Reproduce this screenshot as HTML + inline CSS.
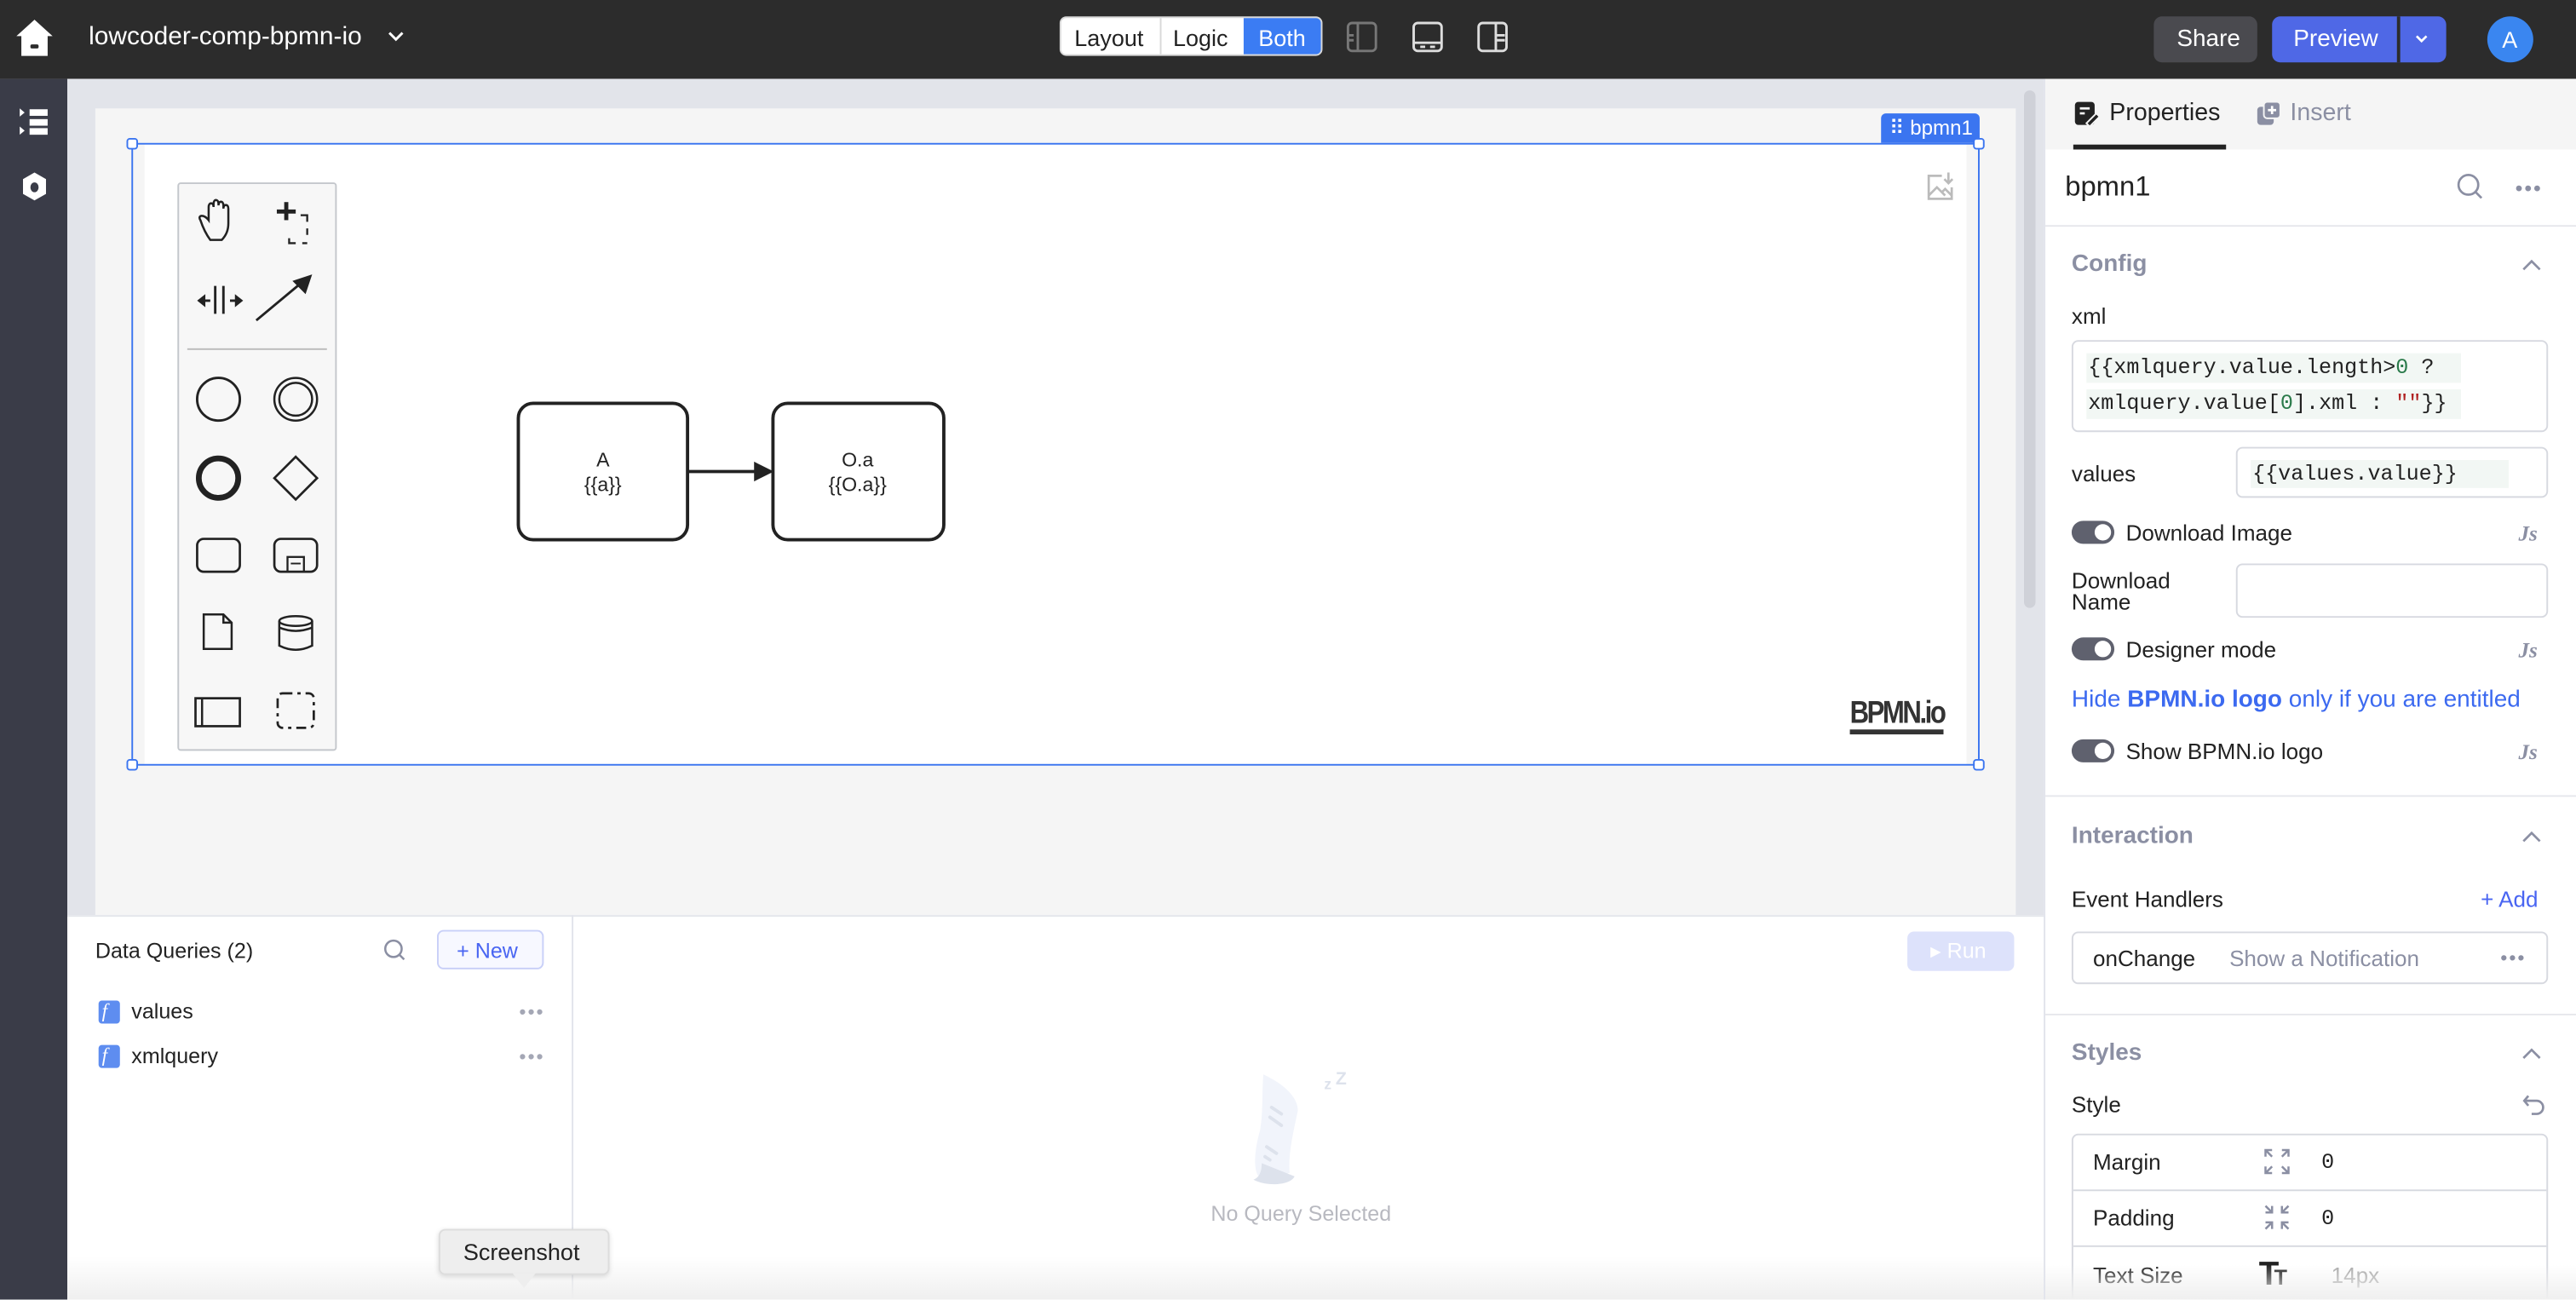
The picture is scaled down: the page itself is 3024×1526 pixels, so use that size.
<!DOCTYPE html>
<html><head><meta charset="utf-8">
<style>
*{box-sizing:border-box;margin:0;padding:0}
html,body{width:3024px;height:1526px;overflow:hidden;background:#fff}
#w{position:absolute;left:0;top:0;width:1568px;height:791px;transform:scale(1.928571);transform-origin:0 0;font-family:"Liberation Sans",sans-serif;color:#222;overflow:hidden}
.a{position:absolute}
.t{position:absolute;white-space:nowrap;line-height:1}
.mono{font-family:"Liberation Mono",monospace}
.tog{position:absolute;width:26px;height:14px;border-radius:7px;background:#5f616e}
.tog:after{content:"";position:absolute;right:2px;top:2px;width:10px;height:10px;border-radius:50%;background:#fff}
.js{position:absolute;font-style:italic;font-weight:bold;color:#8b8fa3;font-size:13px;font-family:"Liberation Serif",serif}
.sec{color:#8b8fa3;font-weight:bold;font-size:14.5px}
.box{position:absolute;border:1px solid #d7d9e0;border-radius:4px;background:#fff}
.h{position:absolute;width:7px;height:7px;border:1.3px solid #3b75f0;background:#fff;border-radius:2px}
.dots{position:absolute;font-size:12px;color:#a4a7b5;letter-spacing:1px;line-height:1}
</style></head><body><div id="w">
<!-- header -->
<div class="a" style="left:0;top:0;width:1568px;height:48px;background:#2c2c2c"></div>
<svg class="a" style="left:8px;top:11px" width="26" height="24" viewBox="0 0 26 24"><path d="M13 1 L24 11 L21 11 L21 23 L5 23 L5 11 L2 11 Z" fill="#fff"/><rect x="10.5" y="16" width="5" height="2.5" rx="1" fill="#2c2c2c"/></svg>
<div class="t" style="left:54px;top:15px;font-size:15.5px;color:#fff">lowcoder-comp-bpmn-io</div>
<svg class="a" style="left:235px;top:17px" width="12" height="10"><path d="M2 3 L6 7 L10 3" stroke="#fff" stroke-width="1.5" fill="none"/></svg>
<div class="a" style="left:645px;top:10px;width:160px;height:24px;border-radius:4px;background:#fff;border:1px solid #d9d9d9;overflow:hidden">
 <div class="a" style="left:60px;top:0;width:1px;height:24px;background:#d9d9d9"></div>
 <div class="a" style="left:111px;top:-1px;width:49px;height:24px;background:#3b7cf3"></div>
 <div class="t" style="left:8px;top:5px;font-size:14px;color:#222">Layout</div>
 <div class="t" style="left:68px;top:5px;font-size:14px;color:#222">Logic</div>
 <div class="t" style="left:120px;top:5px;font-size:14px;color:#fff">Both</div>
</div>
<svg class="a" style="left:819px;top:12px" width="100" height="22" viewBox="0 0 100 22">
 <g fill="none" stroke="#777" stroke-width="1.5"><rect x="1.5" y="2" width="17" height="17" rx="2.5"/><path d="M7.5 2 V19 M2 9.5 H5 M2 12.5 H5"/></g>
 <g fill="none" stroke="#ddd" stroke-width="1.5"><rect x="41.5" y="2" width="17" height="17" rx="2.5"/><path d="M42 14 H58 M45.5 16.5 H48.5 M51.5 16.5 H54.5"/></g>
 <g fill="none" stroke="#ddd" stroke-width="1.5"><rect x="81" y="2" width="17" height="17" rx="2.5"/><path d="M91.5 2 V19 M92 9.5 H97 M92 12.5 H97"/></g>
</svg>
<div class="a" style="left:1311px;top:10px;width:63px;height:28px;border-radius:5px;background:#4a4a4f"></div>
<div class="t" style="left:1325px;top:17px;font-size:14.5px;color:#fff">Share</div>
<div class="a" style="left:1383px;top:10px;width:106px;height:28px;border-radius:5px;background:#4f68e6"></div>
<div class="a" style="left:1459px;top:10px;width:1.5px;height:28px;background:#2c2c2c"></div>
<div class="t" style="left:1396px;top:17px;font-size:14.5px;color:#fff">Preview</div>
<svg class="a" style="left:1468px;top:19px" width="12" height="10"><path d="M3 3 L6 6 L9 3" stroke="#fff" stroke-width="1.4" fill="none"/></svg>
<div class="a" style="left:1514px;top:10px;width:28px;height:28px;border-radius:50%;background:#3a86f0"></div>
<div class="t" style="left:1523px;top:17px;font-size:14px;color:#fff">A</div>
<!-- left sidebar -->
<div class="a" style="left:0;top:48px;width:41px;height:743px;background:#3a3c48"></div>
<svg class="a" style="left:11px;top:65px" width="20" height="20"><g fill="#fff"><path d="M1 1 L4 3.5 L1 6Z M1 12 L4 14.5 L1 17Z"/><rect x="7" y="1.5" width="11" height="4"/><rect x="7" y="7.5" width="11" height="4"/><rect x="7" y="13" width="11" height="4"/></g></svg>
<svg class="a" style="left:12px;top:104px" width="18" height="20"><path d="M9 1 L16 5 L16 14 L9 18 L2 14 L2 5Z" fill="#fff"/><ellipse cx="9" cy="10" rx="2.5" ry="3" fill="#3a3c48"/></svg>
<!-- canvas -->
<div class="a" style="left:41px;top:48px;width:1203px;height:509px;background:#e2e4ea"></div>
<div class="a" style="left:58px;top:66px;width:1169px;height:491px;background:#f5f5f5"></div>
<div class="a" style="left:1232px;top:55px;width:7px;height:315px;border-radius:4px;background:#cfd1d8"></div>
<div class="a" style="left:88px;top:88px;width:1109px;height:378px;background:#fff"></div>
<div class="a" style="left:80px;top:87px;width:1125px;height:379px;border:1.5px solid #3b75f0"></div>
<div class="a" style="left:1145px;top:69px;width:60px;height:18px;background:#3b75f0;border-radius:3px 3px 0 0"></div>
<div class="t" style="left:1150px;top:72px;font-size:12.5px;color:#fff">⠿ bpmn1</div>
<div class="h" style="left:77px;top:84px"></div><div class="h" style="left:1201px;top:84px"></div>
<div class="h" style="left:77px;top:462px"></div><div class="h" style="left:1201px;top:462px"></div>
<svg class="a" style="left:1171px;top:104px" width="20" height="20" viewBox="0 0 20 20"><g fill="none" stroke="#bbb" stroke-width="1.4"><path d="M11 3 H3 V17 H17 V10"/><path d="M3 15 L8 10 L13 15 M11 13 L13 11 L17 15"/><path d="M15 1 V7 M12.5 5 L15 7.5 L17.5 5"/></g></svg>
<!-- palette -->
<div class="a" style="left:108px;top:111px;width:97px;height:346px;background:#f7f7f7;border:1px solid #c4c7cc;border-radius:2px"></div>
<div class="a" style="left:114px;top:212px;width:85px;height:1px;background:#bbb"></div>
<svg class="a" style="left:108px;top:111px" width="97" height="346" viewBox="0 0 97 346">
 <g fill="none" stroke="#222" stroke-width="1.3">
  <path d="M14 23 C12 20 16 19 19 23 L19 15 C19 12 22 12 22 15 L22 13 C22 10 25 10 25 13 L25 14 C25 11 28 11 28 14 L28 16 C28 13 31 13 31 16 L31 25 C31 30 29 33 27 35 L20 35 C17 31 15 26 14 23Z"/>
  <path d="M75 20 H79 V24 M79 28 V32 M79 37 H76 M72 37 H68 V34" stroke-width="1.2"/>
 </g>
 <g fill="#222"><rect x="65" y="12" width="2.5" height="11"/><rect x="60.5" y="16.5" width="11.5" height="2.5"/></g>
 <g fill="none" stroke="#222" stroke-width="1.5"><path d="M23 63 V80 M28 63 V80 M14 72 H20 M32 72 H38 M48 84 L78 59"/></g>
 <path d="M12 72 L17 68 L17 76Z M40 72 L35 68 L35 76Z M82 56 L70 60 L78 68Z" fill="#222"/>
 <g fill="none" stroke="#222">
  <circle cx="25" cy="132" r="13" stroke-width="1.5"/>
  <circle cx="72" cy="132" r="13" stroke-width="1.3"/><circle cx="72" cy="132" r="10" stroke-width="1.3"/>
  <circle cx="25" cy="180" r="12" stroke-width="3.5"/>
  <path d="M72 167 L85 180 L72 193 L59 180Z" stroke-width="1.4"/>
  <rect x="12" y="217" width="26" height="20" rx="4" stroke-width="1.4"/>
  <rect x="59" y="217" width="26" height="20" rx="4" stroke-width="1.4"/><rect x="67" y="228" width="10" height="9" stroke-width="1.2"/><path d="M69 232 H75"/>
  <path d="M16 263 H28 L33 268 V284 H16Z M28 263 V268 H33" stroke-width="1.3"/>
  <ellipse cx="72" cy="267" rx="10" ry="3" stroke-width="1.3"/><path d="M62 267 V282 Q72 287 82 282 V267 M62 271 Q72 275 82 271" stroke-width="1.3"/>
  <rect x="11" y="314" width="27" height="17" stroke-width="1.4"/><path d="M15 314 V331" stroke-width="1.3"/>
  <rect x="61" y="311" width="22" height="21" rx="3" stroke-width="1.4" stroke-dasharray="6 3 2 3"/>
 </g>
</svg>
<!-- diagram -->
<svg class="a" style="left:300px;top:235px" width="300" height="110" viewBox="300 235 300 110">
 <rect x="315.5" y="245.5" width="103" height="83" rx="9" fill="#fff" stroke="#222" stroke-width="2"/>
 <rect x="470.5" y="245.5" width="104" height="83" rx="9" fill="#fff" stroke="#222" stroke-width="2"/>
 <path d="M419 287 H462" stroke="#222" stroke-width="2"/><path d="M459 281 L471 287 L459 293Z" fill="#222"/>
 <text x="367" y="284" font-size="12" text-anchor="middle" fill="#222" font-family="Liberation Sans">A</text>
 <text x="367" y="299" font-size="12" text-anchor="middle" fill="#222" font-family="Liberation Sans">{{a}}</text>
 <text x="522" y="284" font-size="12" text-anchor="middle" fill="#222" font-family="Liberation Sans">O.a</text>
 <text x="522" y="299" font-size="12" text-anchor="middle" fill="#222" font-family="Liberation Sans">{{O.a}}</text>
</svg>
<div class="t" style="left:1126px;top:425px;font-size:19px;font-weight:bold;color:#333;letter-spacing:-1.5px;transform:scaleX(0.85);transform-origin:0 0">BPMN.io</div>
<div class="a" style="left:1126px;top:444px;width:57px;height:3px;background:#333"></div>
<!-- bottom panel -->
<div class="a" style="left:41px;top:557px;width:1203px;height:234px;background:#fff;border-top:1px solid #e4e6eb"></div>
<div class="a" style="left:348px;top:557px;width:1px;height:234px;background:#e1e3eb"></div>
<div class="t" style="left:58px;top:572px;font-size:13px;color:#222">Data Queries (2)</div>
<svg class="a" style="left:233px;top:571px" width="15" height="15"><circle cx="6.5" cy="6.5" r="5" fill="none" stroke="#8b8fa3" stroke-width="1.3"/><path d="M10 10 L13 13" stroke="#8b8fa3" stroke-width="1.3"/></svg>
<div class="a" style="left:266px;top:566px;width:65px;height:24px;border:1px solid #c9d0f8;border-radius:4px;background:#f7f8ff"></div>
<div class="t" style="left:278px;top:572px;font-size:13px;color:#4965f2">+ New</div>
<div class="a" style="left:60px;top:609px;width:13px;height:14px;border-radius:2px;background:#5e8df0"></div>
<div class="t" style="left:62px;top:609px;font-size:12px;color:#fff;font-style:italic;font-family:'Liberation Serif',serif">f</div>
<div class="t" style="left:80px;top:609px;font-size:13px">values</div>
<div class="dots" style="left:316px;top:610px">•••</div>
<div class="a" style="left:60px;top:636px;width:13px;height:14px;border-radius:2px;background:#5e8df0"></div>
<div class="t" style="left:62px;top:636px;font-size:12px;color:#fff;font-style:italic;font-family:'Liberation Serif',serif">f</div>
<div class="t" style="left:80px;top:636px;font-size:13px">xmlquery</div>
<div class="dots" style="left:316px;top:637px">•••</div>
<div class="a" style="left:1161px;top:567px;width:65px;height:24px;border-radius:4px;background:#dde2fb"></div>
<div class="t" style="left:1175px;top:572px;font-size:13px;color:#fff">▸ Run</div>
<svg class="a" style="left:760px;top:648px" width="70" height="75" viewBox="0 0 70 75"><path d="M9 6 C22 12 30 20 30 28 C27 42 24 55 25 66 L7 69 C2 65 4 50 7 40 C9 28 8 18 9 6Z" fill="#f1f4fb"/><path d="M8 60 C8 66 6 69 3 70 C10 74 25 74 28 68Z" fill="#dde2ec"/><g stroke="#dde2ec" stroke-width="2" stroke-linecap="round"><path d="M14 26 L20 30 M13 32 L20 37 M11 50 L17 54 M10 56 L13 58"/></g><text x="46" y="15" font-size="9" font-weight="bold" fill="#dde2ec">z</text><text x="53" y="12" font-size="11" font-weight="bold" fill="#dde2ec">Z</text></svg>
<div class="t" style="left:737px;top:732px;font-size:13px;color:#b8b9c0">No Query Selected</div>
<div class="a" style="left:41px;top:765px;width:1203px;height:26px;background:linear-gradient(#fff0,#efefef)"></div>
<div class="a" style="left:267px;top:748px;width:104px;height:28px;background:#eee;border:1px solid #ddd;border-radius:4px;box-shadow:0 1px 3px #0002"></div>
<div class="a" style="left:312px;top:775px;width:0;height:0;border-left:7px solid transparent;border-right:7px solid transparent;border-top:9px solid #eee"></div>
<div class="t" style="left:282px;top:755px;font-size:14px;color:#222">Screenshot</div>
<!-- right panel -->
<div class="a" style="left:1244px;top:48px;width:324px;height:743px;background:#fff;border-left:1px solid #e1e3eb"></div>
<div class="a" style="left:1245px;top:48px;width:323px;height:43px;background:#f5f5f5"></div>
<svg class="a" style="left:1262px;top:61px" width="16" height="16"><rect x="1" y="1" width="12" height="14" rx="2" fill="#222"/><path d="M4 5 H10 M4 8 H7" stroke="#f5f5f5" stroke-width="1.4"/><path d="M8 14 L14 8 L16 10 L10 16Z" fill="#222" stroke="#f5f5f5"/></svg>
<div class="t" style="left:1284px;top:62px;font-size:14.8px;color:#222">Properties</div>
<div class="a" style="left:1262px;top:88px;width:93px;height:3px;background:#222"></div>
<svg class="a" style="left:1373px;top:61px" width="16" height="16"><rect x="1" y="4" width="10" height="11" rx="2" fill="#8b8fa3"/><rect x="5" y="1" width="10" height="10" rx="2" fill="#8b8fa3" stroke="#f5f5f5"/><path d="M10 3.5 V8.5 M7.5 6 H12.5" stroke="#fff" stroke-width="1.4"/></svg>
<div class="t" style="left:1394px;top:62px;font-size:14.8px;color:#8b8fa3">Insert</div>
<div class="t" style="left:1257px;top:105px;font-size:17px;color:#222">bpmn1</div>
<svg class="a" style="left:1495px;top:105px" width="17" height="17"><circle cx="7.5" cy="7.5" r="6" fill="none" stroke="#8b8fa3" stroke-width="1.4"/><path d="M12 12 L15.5 15.5" stroke="#8b8fa3" stroke-width="1.4"/></svg>
<div class="dots" style="left:1531px;top:108px;font-size:13px;color:#8b8fa3">•••</div>
<div class="a" style="left:1245px;top:137px;width:323px;height:1px;background:#e6e7ec"></div>
<div class="t sec" style="left:1261px;top:154px">Config</div>
<svg class="a" style="left:1534px;top:156px" width="14" height="10"><path d="M2 8 L7 3 L12 8" fill="none" stroke="#8b8fa3" stroke-width="1.4"/></svg>
<div class="t" style="left:1261px;top:186px;font-size:13.5px">xml</div>
<div class="box" style="left:1261px;top:207px;width:290px;height:56px"></div>
<div class="a" style="left:1270px;top:215px;width:228px;height:18px;background:#f2f7f4"></div>
<div class="a" style="left:1270px;top:237px;width:228px;height:18px;background:#f2f7f4"></div>
<div class="t mono" style="left:1271px;top:217px;font-size:13px;color:#222">{{xmlquery.value.length&gt;<span style="color:#2a7a4a">0</span> ?</div>
<div class="t mono" style="left:1271px;top:239px;font-size:13px;color:#222">xmlquery.value[<span style="color:#2a7a4a">0</span>].xml : <span style="color:#b02222">""</span>}}</div>
<div class="t" style="left:1261px;top:282px;font-size:13.5px">values</div>
<div class="box" style="left:1361px;top:272px;width:190px;height:31px"></div>
<div class="a" style="left:1370px;top:280px;width:157px;height:17px;background:#f2f7f4"></div>
<div class="t mono" style="left:1371px;top:282px;font-size:13px">{{values.value}}</div>
<div class="tog" style="left:1261px;top:317px"></div>
<div class="t" style="left:1294px;top:318px;font-size:13.5px">Download Image</div>
<div class="js" style="left:1533px;top:317px">Js</div>
<div class="t" style="left:1261px;top:347px;font-size:13.5px;line-height:13px">Download<br>Name</div>
<div class="box" style="left:1361px;top:343px;width:190px;height:33px"></div>
<div class="tog" style="left:1261px;top:388px"></div>
<div class="t" style="left:1294px;top:389px;font-size:13.5px">Designer mode</div>
<div class="js" style="left:1533px;top:388px">Js</div>
<div class="t" style="left:1261px;top:419px;font-size:14.5px;color:#3c6af0">Hide <b>BPMN.io logo</b> only if you are entitled</div>
<div class="tog" style="left:1261px;top:450px"></div>
<div class="t" style="left:1294px;top:451px;font-size:13.5px">Show BPMN.io logo</div>
<div class="js" style="left:1533px;top:450px">Js</div>
<div class="a" style="left:1245px;top:484px;width:323px;height:1px;background:#e6e7ec"></div>
<div class="t sec" style="left:1261px;top:502px">Interaction</div>
<svg class="a" style="left:1534px;top:504px" width="14" height="10"><path d="M2 8 L7 3 L12 8" fill="none" stroke="#8b8fa3" stroke-width="1.4"/></svg>
<div class="t" style="left:1261px;top:541px;font-size:13.5px">Event Handlers</div>
<div class="t" style="left:1510px;top:541px;font-size:13.5px;color:#4965f2">+ Add</div>
<div class="box" style="left:1261px;top:567px;width:290px;height:32px"></div>
<div class="t" style="left:1274px;top:577px;font-size:13.5px">onChange</div>
<div class="t" style="left:1357px;top:577px;font-size:13.5px;color:#8b8fa3">Show a Notification</div>
<div class="dots" style="left:1522px;top:577px;color:#8b8fa3">•••</div>
<div class="a" style="left:1245px;top:617px;width:323px;height:1px;background:#e6e7ec"></div>
<div class="t sec" style="left:1261px;top:634px">Styles</div>
<svg class="a" style="left:1534px;top:636px" width="14" height="10"><path d="M2 8 L7 3 L12 8" fill="none" stroke="#8b8fa3" stroke-width="1.4"/></svg>
<div class="t" style="left:1261px;top:666px;font-size:13.5px">Style</div>
<svg class="a" style="left:1535px;top:665px" width="15" height="15"><path d="M4 2 L1.5 5 L4 8 M2 5 H9 A4 4 0 0 1 9 13 H6" fill="none" stroke="#8b8fa3" stroke-width="1.4"/></svg>
<div class="box" style="left:1261px;top:690px;width:290px;height:110px"></div>
<div class="a" style="left:1262px;top:724px;width:288px;height:1px;background:#d7d9e0"></div>
<div class="a" style="left:1262px;top:758px;width:288px;height:1px;background:#d7d9e0"></div>
<div class="t" style="left:1274px;top:701px;font-size:13.5px">Margin</div>
<div class="t" style="left:1274px;top:735px;font-size:13.5px">Padding</div>
<div class="t" style="left:1274px;top:770px;font-size:13.5px">Text Size</div>
<svg class="a" style="left:1378px;top:699px" width="16" height="16"><g fill="none" stroke="#8b8fa3" stroke-width="1.3"><path d="M1 5 V1 H5 M1 1 L5 5 M11 1 H15 V5 M15 1 L11 5 M1 11 V15 H5 M1 15 L5 11 M15 11 V15 H11 M15 15 L11 11"/></g></svg>
<svg class="a" style="left:1378px;top:733px" width="16" height="16"><g fill="none" stroke="#8b8fa3" stroke-width="1.3"><path d="M1 1 L5 5 M5 1 V5 H1 M15 1 L11 5 M11 1 V5 H15 M1 15 L5 11 M1 11 H5 V15 M15 15 L11 11 M15 11 H11 V15"/></g></svg>
<div class="t mono" style="left:1413px;top:701px;font-size:13px">0</div>
<div class="t mono" style="left:1413px;top:735px;font-size:13px">0</div>
<div class="t" style="left:1375px;top:766px;font-size:20px;font-weight:bold;color:#222;letter-spacing:-3px">T<span style="font-size:13px">T</span></div>
<div class="t" style="left:1419px;top:770px;font-size:13.5px;color:#aaa">14px</div>
<div class="a" style="left:1245px;top:770px;width:323px;height:21px;background:linear-gradient(#fff0,#efefef)"></div>
</div></body></html>
